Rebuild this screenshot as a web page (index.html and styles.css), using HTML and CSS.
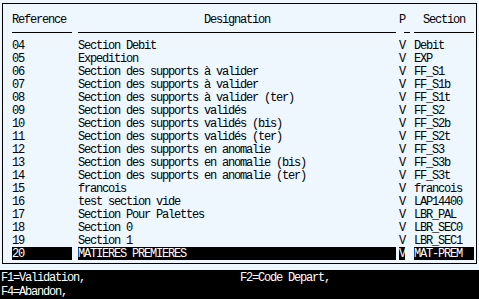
FILE: index.html
```html
<!DOCTYPE html>
<html>
<head>
<meta charset="utf-8">
<link rel="stylesheet" href="styles.css">
</head>
<body>
<div class="panel">
  <div class="grid head">
    <div class="hc left">Reference</div>
    <div class="hc center">Designation</div>
    <div class="hc center">P</div>
    <div class="hc center">Section</div>
  </div>
  <div class="rows">
    <div class="grid row"><span>04</span><span>Section Debit</span><span>V</span><span>Debit</span></div>
    <div class="grid row"><span>05</span><span>Expedition</span><span>V</span><span>EXP</span></div>
    <div class="grid row"><span>06</span><span>Section des supports à valider</span><span>V</span><span>FF_S1</span></div>
    <div class="grid row"><span>07</span><span>Section des supports à valider</span><span>V</span><span>FF_S1b</span></div>
    <div class="grid row"><span>08</span><span>Section des supports à valider (ter)</span><span>V</span><span>FF_S1t</span></div>
    <div class="grid row"><span>09</span><span>Section des supports validés</span><span>V</span><span>FF_S2</span></div>
    <div class="grid row"><span>10</span><span>Section des supports validés (bis)</span><span>V</span><span>FF_S2b</span></div>
    <div class="grid row"><span>11</span><span>Section des supports validés (ter)</span><span>V</span><span>FF_S2t</span></div>
    <div class="grid row"><span>12</span><span>Section des supports en anomalie</span><span>V</span><span>FF_S3</span></div>
    <div class="grid row"><span>13</span><span>Section des supports en anomalie (bis)</span><span>V</span><span>FF_S3b</span></div>
    <div class="grid row"><span>14</span><span>Section des supports en anomalie (ter)</span><span>V</span><span>FF_S3t</span></div>
    <div class="grid row"><span>15</span><span>francois</span><span>V</span><span>francois</span></div>
    <div class="grid row"><span>16</span><span>test section vide</span><span>V</span><span>LAP14400</span></div>
    <div class="grid row"><span>17</span><span>Section Pour Palettes</span><span>V</span><span>LBR_PAL</span></div>
    <div class="grid row"><span>18</span><span>Section 0</span><span>V</span><span>LBR_SEC0</span></div>
    <div class="grid row"><span>19</span><span>Section 1</span><span>V</span><span>LBR_SEC1</span></div>
    <div class="grid row sel"><span>20</span><span>MATIERES PREMIERES</span><span>V</span><span>MAT-PREM</span></div>
  </div>
</div>
<div class="footer">
  <span>F1=Validation,</span><span>F2=Code Depart,</span>
  <span>F4=Abandon,</span><span></span>
</div>
</body>
</html>
```
FILE: styles.css
```css
html, body {
  margin: 0;
  padding: 0;
}
body {
  width: 479px;
  height: 299px;
  overflow: hidden;
  background: #eef6fe;
  color: #000;
  font-family: "Liberation Mono", "DejaVu Sans Mono", monospace;
  font-size: 12px;
  letter-spacing: -1.2px;
  line-height: 13px;
}
.panel {
  box-sizing: border-box;
  margin: 3px 0 0 2px;
  width: 475px;
  height: 261px;
  border: 1px solid #000;
  padding: 9px 0 0 9px;
}
.grid {
  display: grid;
  grid-template-columns: 60px 318px 6px 60px;
  column-gap: 6px;
}
.grid > :nth-child(3) {
  margin-left: -3px;
  margin-right: 3px;
}
.head > :nth-child(3) {
  margin-left: 2px;
  margin-right: -2px;
  text-align: left;
  text-indent: -5px;
}
.hc {
  box-sizing: border-box;
  height: 20px;
  padding: 1px 0 6px;
  border-bottom: 1px solid #000;
  white-space: pre;
}
.left { text-align: left; }
.center { text-align: center; }
.rows {
  margin-top: 6px;
}
.row {
  height: 13px;
  white-space: pre;
}
.row span {
  box-sizing: border-box;
  height: 13px;
  padding-top: 1px;
  line-height: 12px;
}
.sel span {
  background: #000;
  color: #fff;
}
.footer {
  margin-top: 6px;
  height: 29px;
  background: #000;
  color: #fff;
  display: grid;
  grid-template-columns: 239px 240px;
  padding: 1px 0 0 1px;
  box-sizing: border-box;
  white-space: pre;
  line-height: 12px;
}
.footer span {
  padding-top: 1px;
}
```
